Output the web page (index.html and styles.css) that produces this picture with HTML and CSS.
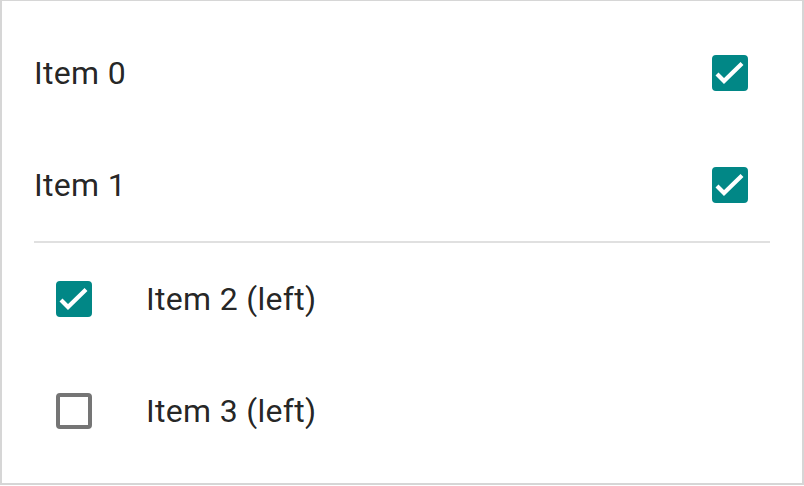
FILE: index.html
```html
<!DOCTYPE html>
<html>
<head>
<meta charset="utf-8">
<link rel="stylesheet" href="styles.css">
</head>
<body>
<div class="list">
  <div class="item">
    <span class="label">Item 0</span>
    <span class="meta"><span class="box checked"><svg viewBox="0 0 36 36"><path d="M5,19 L12,26 L30,8.5"/></svg></span></span>
  </div>
  <div class="item">
    <span class="label">Item 1</span>
    <span class="meta"><span class="box checked"><svg viewBox="0 0 36 36"><path d="M5,19 L12,26 L30,8.5"/></svg></span></span>
  </div>
  <div class="divider"></div>
  <div class="item">
    <span class="graphic"><span class="box checked"><svg viewBox="0 0 36 36"><path d="M5,19 L12,26 L30,8.5"/></svg></span></span>
    <span class="label">Item 2 (left)</span>
  </div>
  <div class="item">
    <span class="graphic"><span class="box"></span></span>
    <span class="label">Item 3 (left)</span>
  </div>
</div>
</body>
</html>
```
FILE: styles.css
```css
html, body {
  margin: 0;
  padding: 0;
  background: #ffffff;
}
.list {
  width: 804px;
  height: 485px;
  box-sizing: border-box;
  border: 2px solid #d6d6d6;
  border-top-width: 1px;
  padding: 16px 0;
  font-family: Roboto, "Liberation Sans", sans-serif;
  font-size: 32px;
  letter-spacing: 0.3px;
  color: rgba(0, 0, 0, 0.87);
  display: flex;
  flex-direction: column;
}
.item {
  height: 112px;
  display: flex;
  align-items: center;
  padding: 0 32px;
}
.label {
  flex: 1;
  line-height: 48px;
}
.meta,
.graphic {
  width: 80px;
  height: 80px;
  display: flex;
  align-items: center;
  justify-content: center;
}
.graphic {
  margin-right: 32px;
}
.box {
  width: 36px;
  height: 36px;
  box-sizing: border-box;
  border: 4px solid #757575;
  border-radius: 4px;
  display: block;
  position: relative;
}
.box.checked {
  background: #018786;
  border-color: #018786;
}
.box svg {
  position: absolute;
  left: -4px;
  top: -4px;
  width: 36px;
  height: 36px;
}
.box svg path {
  fill: none;
  stroke: #ffffff;
  stroke-width: 4.2;
}
.divider {
  height: 2px;
  background: #e0e0e0;
  margin: 0 32px;
}
```
